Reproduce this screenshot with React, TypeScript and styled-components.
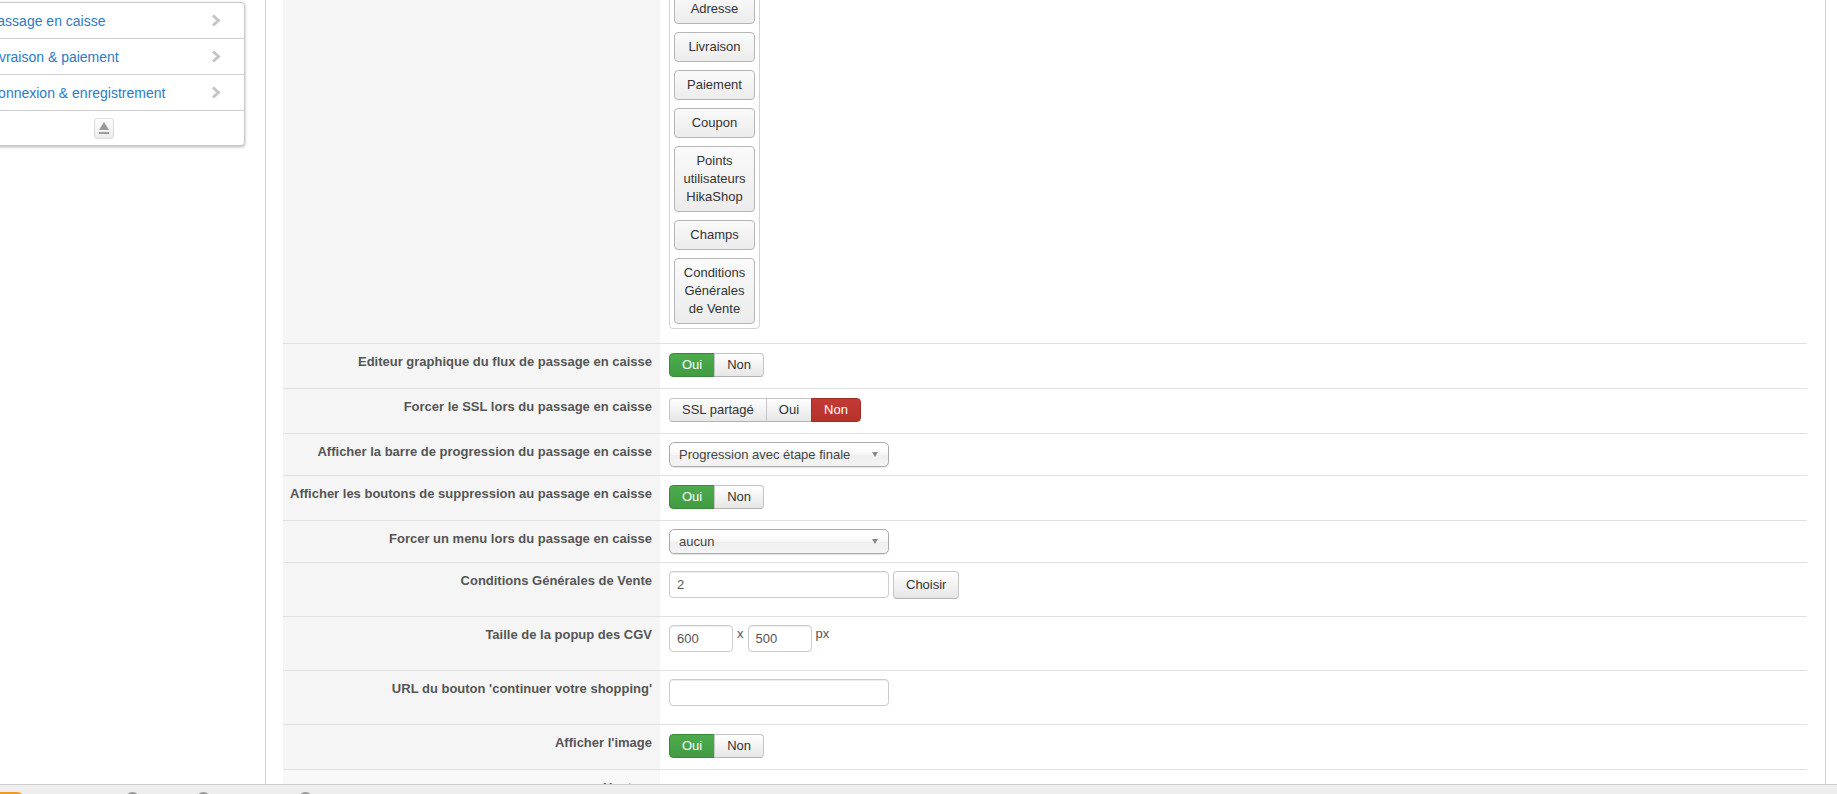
import styled, { createGlobalStyle } from 'styled-components';

const GlobalStyle = createGlobalStyle`
  * {
    box-sizing: border-box;
  }

  html,
  body {
    margin: 0;
    padding: 0;
    background: #fff;
  }

  body {
    font-family: 'Liberation Sans', Arial, sans-serif;
    font-size: 13px;
    color: #333;
  }
`;

const Page = styled.div`
  display: flex;
  flex-direction: column;
  width: 1837px;
  height: 794px;
  overflow: hidden;
`;

const Main = styled.div`
  display: flex;
  flex: 0 0 784px;
  overflow: hidden;
`;

const SideColumn = styled.aside`
  flex: 0 0 266px;
  border-right: 1px solid #cfcfcf;
  overflow: hidden;
`;

const SidePanel = styled.div`
  width: 282px;
  margin: 2px 0 0 -37px;
  background: #fff;
  border: 1px solid #c9c9c9;
  border-radius: 0 4px 4px 0;
  box-shadow: 0 1px 3px rgba(0, 0, 0, 0.3);
`;

const NavItem = styled.a`
  display: flex;
  align-items: center;
  justify-content: space-between;
  height: 36px;
  padding: 0 23px 0 24px;
  border-bottom: 1px solid #cfcfcf;
  color: #2b7bc8;
  font-size: 14px;
  text-decoration: none;
  white-space: nowrap;
`;

const SideFooter = styled.div`
  display: flex;
  align-items: center;
  justify-content: center;
  height: 34px;
`;

const CollapseButton = styled.button`
  display: flex;
  align-items: center;
  justify-content: center;
  width: 20px;
  height: 21px;
  padding: 0;
  border: 1px solid #dcdcdc;
  border-radius: 3px;
  background: linear-gradient(#ffffff, #ececec);
`;

const Content = styled.main`
  flex: 1;
  margin-right: 11px;
  padding: 0 18px 0 17px;
  border-right: 1px solid #cfcfcf;
  overflow: hidden;
`;

const Table = styled.div`
  margin-top: -20px;
`;

const Row = styled.div`
  display: grid;
  grid-template-columns: 377px 1fr;
  border-top: 1px solid #e0e0e0;
`;

const Label = styled.div<{ $faded?: boolean }>`
  padding: 9px 8px 8px 4px;
  background: ${(props) => (props.$faded ? '#f9f9f9' : '#f5f5f5')};
  color: #555;
  font-size: 13px;
  font-weight: bold;
  line-height: 18px;
  text-align: right;
  white-space: nowrap;
`;

const Value = styled.div`
  display: flex;
  align-items: flex-start;
  padding: 8px 9px;
  background: #fff;
`;

const StepBox = styled.div`
  display: flex;
  flex-direction: column;
  gap: 8px;
  width: 91px;
  margin-bottom: 6px;
  padding: 4px;
  border: 1px solid #d3d3d3;
  border-radius: 0 0 4px 4px;
`;

const StepButton = styled.div`
  padding: 5px 3px;
  border: 1px solid #b5b5b5;
  border-radius: 4px;
  background: linear-gradient(#fafafa, #ececec);
  color: #333;
  font-size: 13px;
  line-height: 18px;
  text-align: center;
`;

const Toggle = styled.div`
  display: inline-flex;
  margin: 1px 0 3px;
`;

type Tone = 'success' | 'danger' | 'none';

const toneBg: Record<Tone, string> = {
  success: 'linear-gradient(#4dab4d, #429c42)',
  danger: 'linear-gradient(#c23a33, #b5322b)',
  none: 'linear-gradient(#ffffff, #e6e6e6)',
};

const toneBorder: Record<Tone, string> = {
  success: '#3b8a3b',
  danger: '#9f2d27',
  none: '#c5c5c5',
};

const Segment = styled.button<{ $tone: Tone }>`
  padding: 3px 12px;
  margin-left: -1px;
  border: 1px solid ${(props) => toneBorder[props.$tone]};
  border-bottom-color: ${(props) => (props.$tone === 'none' ? '#b3b3b3' : toneBorder[props.$tone])};
  background: ${(props) => toneBg[props.$tone]};
  color: ${(props) => (props.$tone === 'none' ? '#333' : '#fff')};
  font-family: inherit;
  font-size: 13px;
  line-height: 16px;
  white-space: nowrap;

  &:first-child {
    margin-left: 0;
    border-radius: 4px 0 0 4px;
  }

  &:last-child {
    border-radius: 0 4px 4px 0;
  }
`;

const Select = styled.div`
  display: flex;
  align-items: center;
  justify-content: space-between;
  width: 220px;
  height: 25px;
  padding: 0 10px 0 9px;
  border: 1px solid #aaa;
  border-radius: 5px;
  background: linear-gradient(#fff 20%, #f6f6f6 50%, #eee 52%, #f4f4f4 100%);
  box-shadow: 0 1px 1px rgba(0, 0, 0, 0.1);
  color: #444;
  font-size: 13px;
  white-space: nowrap;
`;

const SelectArrow = styled.span`
  width: 0;
  height: 0;
  border-left: 3px solid transparent;
  border-right: 3px solid transparent;
  border-top: 5px solid #888;
`;

const TextInput = styled.input<{ $width: number }>`
  width: ${(props) => props.$width}px;
  height: 27px;
  margin: 0 0 10px;
  padding: 4px 7px;
  border: 1px solid #ccc;
  border-radius: 4px;
  box-shadow: inset 0 1px 1px rgba(0, 0, 0, 0.075);
  color: #555;
  font-family: inherit;
  font-size: 13px;
  line-height: 17px;
`;

const PickButton = styled.button`
  margin-left: 4px;
  padding: 4px 12px;
  border: 1px solid #c5c5c5;
  border-bottom-color: #b3b3b3;
  border-radius: 4px;
  background: linear-gradient(#ffffff, #e6e6e6);
  color: #333;
  font-family: inherit;
  font-size: 13px;
  line-height: 18px;
`;

const Unit = styled.span`
  margin: 0 4px;
  color: #555;
  font-size: 13px;
  line-height: 18px;
`;

const StatusBar = styled.footer`
  display: flex;
  flex: 0 0 10px;
  padding-top: 7px;
  border-top: 1px solid #cfcfcf;
  background: #eeeeee;
  overflow: hidden;
`;

const StatusBadge = styled.span`
  flex: none;
  width: 25px;
  height: 16px;
  border-radius: 0 8px 8px 0;
  background: #f39a1e;
`;

const StatusDot = styled.span<{ $gap: number }>`
  flex: none;
  width: 15px;
  height: 15px;
  margin-left: ${(props) => props.$gap}px;
  border-radius: 50%;
  background: #9a9a9a;
`;

function Chevron() {
  return (
    <svg width='10' height='13' viewBox='0 0 10 13'>
      <polyline points='2,1.5 7.5,6.5 2,11.5' fill='none' stroke='#c5c5c5' strokeWidth='3' />
    </svg>
  );
}

function EjectIcon() {
  return (
    <svg width='10' height='12' viewBox='0 0 10 12'>
      <polygon points='0,8 5,0 10,8' fill='#9a9a9a' />
      <rect x='0' y='10' width='10' height='2' fill='#9a9a9a' />
    </svg>
  );
}

const navItems = ['Passage en caisse', 'Livraison & paiement', 'Connexion & enregistrement'];

const steps = [
  ['Adresse'],
  ['Livraison'],
  ['Paiement'],
  ['Coupon'],
  ['Points', 'utilisateurs', 'HikaShop'],
  ['Champs'],
  ['Conditions', 'Générales', 'de Vente'],
];

function YesNo({ value }: { value: boolean }) {
  return (
    <Toggle>
      <Segment $tone={value ? 'success' : 'none'}>Oui</Segment>
      <Segment $tone={value ? 'none' : 'danger'}>Non</Segment>
    </Toggle>
  );
}

function App() {
  return (
    <Page>
      <GlobalStyle />
      <Main>
        <SideColumn>
          <SidePanel>
            {navItems.map((item) => (
              <NavItem key={item} href='#'>
                {item}
                <Chevron />
              </NavItem>
            ))}
            <SideFooter>
              <CollapseButton>
                <EjectIcon />
              </CollapseButton>
            </SideFooter>
          </SidePanel>
        </SideColumn>

        <Content>
          <Table>
            <Row>
              <Label />
              <Value>
                <StepBox>
                  {steps.map((lines) => (
                    <StepButton key={lines.join(' ')}>
                      {lines.map((line) => (
                        <div key={line}>{line}</div>
                      ))}
                    </StepButton>
                  ))}
                </StepBox>
              </Value>
            </Row>

            <Row>
              <Label>Editeur graphique du flux de passage en caisse</Label>
              <Value>
                <YesNo value />
              </Value>
            </Row>

            <Row>
              <Label>Forcer le SSL lors du passage en caisse</Label>
              <Value>
                <Toggle>
                  <Segment $tone='none'>SSL partagé</Segment>
                  <Segment $tone='none'>Oui</Segment>
                  <Segment $tone='danger'>Non</Segment>
                </Toggle>
              </Value>
            </Row>

            <Row>
              <Label>Afficher la barre de progression du passage en caisse</Label>
              <Value>
                <Select>
                  Progression avec étape finale
                  <SelectArrow />
                </Select>
              </Value>
            </Row>

            <Row>
              <Label>Afficher les boutons de suppression au passage en caisse</Label>
              <Value>
                <YesNo value />
              </Value>
            </Row>

            <Row>
              <Label>Forcer un menu lors du passage en caisse</Label>
              <Value>
                <Select>
                  aucun
                  <SelectArrow />
                </Select>
              </Value>
            </Row>

            <Row>
              <Label>Conditions Générales de Vente</Label>
              <Value>
                <TextInput $width={220} defaultValue='2' />
                <PickButton>Choisir</PickButton>
              </Value>
            </Row>

            <Row>
              <Label>Taille de la popup des CGV</Label>
              <Value>
                <TextInput $width={64} defaultValue='600' />
                <Unit>x</Unit>
                <TextInput $width={64} defaultValue='500' />
                <Unit>px</Unit>
              </Value>
            </Row>

            <Row>
              <Label>URL du bouton 'continuer votre shopping'</Label>
              <Value>
                <TextInput $width={220} defaultValue='' />
              </Value>
            </Row>

            <Row>
              <Label>Afficher l'image</Label>
              <Value>
                <YesNo value />
              </Value>
            </Row>

            <Row>
              <Label $faded>Hauteur</Label>
              <Value />
            </Row>
          </Table>
        </Content>
      </Main>

      <StatusBar>
        <StatusBadge />
        <StatusDot $gap={100} />
        <StatusDot $gap={56} />
        <StatusDot $gap={87} />
      </StatusBar>
    </Page>
  );
}

export default App;
